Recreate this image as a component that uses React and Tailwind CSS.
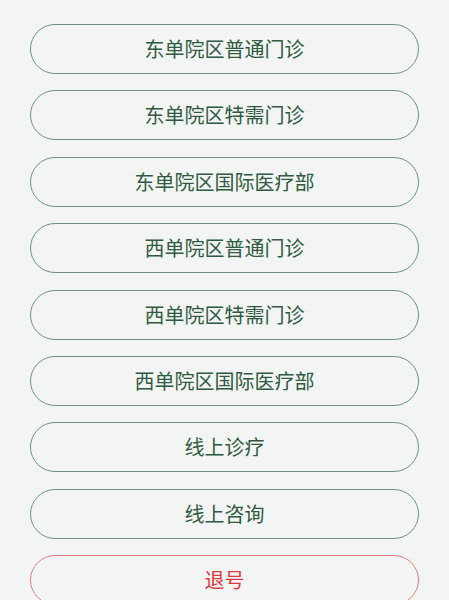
import React from "react";

const items = [
  "东单院区普通门诊",
  "东单院区特需门诊",
  "东单院区国际医疗部",
  "西单院区普通门诊",
  "西单院区特需门诊",
  "西单院区国际医疗部",
  "线上诊疗",
  "线上咨询",
];

const App = () => {
  return (
    <div
      className="min-h-[600px] bg-[#f3f5f4] px-[30px] pt-[24px] pb-[30px] flex flex-col gap-[16.4px]"
      style={{ fontFamily: '"Noto Sans CJK SC", "Noto Sans", sans-serif' }}
    >
      {items.map((label) => (
        <button
          key={label}
          className="h-[50px] w-full rounded-full border border-[#6f9080] text-[#2f5a40] text-[20px] leading-none flex items-center justify-center"
        >
          {label}
        </button>
      ))}
      <button className="h-[50px] w-full rounded-full border border-[#e07a7c] text-[#e0383d] text-[20px] leading-none flex items-center justify-center">
        退号
      </button>
    </div>
  );
};

export default App;
